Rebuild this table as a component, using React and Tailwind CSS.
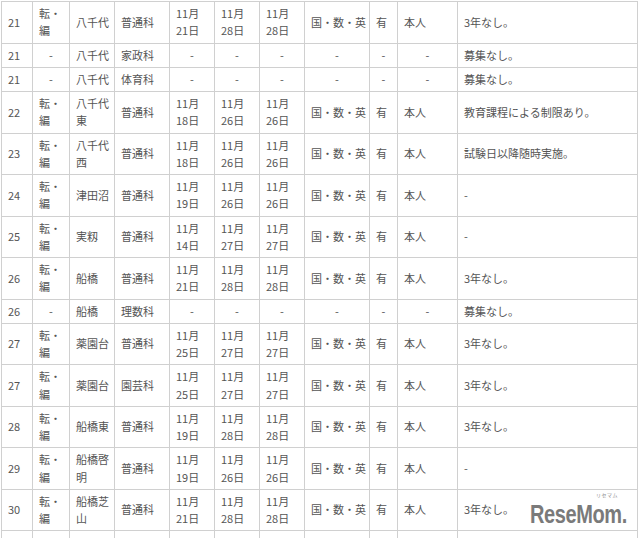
import React from "react";

const D = "-";
const rows = [
  ["21", "転・編", "八千代", "普通科", "11月21日", "11月28日", "11月28日", "国・数・英", "有", "本人", "3年なし。"],
  ["21", D, "八千代", "家政科", D, D, D, D, D, D, "募集なし。"],
  ["21", D, "八千代", "体育科", D, D, D, D, D, D, "募集なし。"],
  ["22", "転・編", "八千代東", "普通科", "11月18日", "11月26日", "11月26日", "国・数・英", "有", "本人", "教育課程による制限あり。"],
  ["23", "転・編", "八千代西", "普通科", "11月18日", "11月26日", "11月26日", "国・数・英", "有", "本人", "試験日以降随時実施。"],
  ["24", "転・編", "津田沼", "普通科", "11月19日", "11月26日", "11月26日", "国・数・英", "有", "本人", "-"],
  ["25", "転・編", "実籾", "普通科", "11月14日", "11月27日", "11月27日", "国・数・英", "有", "本人", "-"],
  ["26", "転・編", "船橋", "普通科", "11月21日", "11月28日", "11月28日", "国・数・英", "有", "本人", "3年なし。"],
  ["26", D, "船橋", "理数科", D, D, D, D, D, D, "募集なし。"],
  ["27", "転・編", "薬園台", "普通科", "11月25日", "11月27日", "11月27日", "国・数・英", "有", "本人", "3年なし。"],
  ["27", "転・編", "薬園台", "園芸科", "11月25日", "11月27日", "11月27日", "国・数・英", "有", "本人", "3年なし。"],
  ["28", "転・編", "船橋東", "普通科", "11月19日", "11月28日", "11月28日", "国・数・英", "有", "本人", "3年なし。"],
  ["29", "転・編", "船橋啓明", "普通科", "11月19日", "11月26日", "11月26日", "国・数・英", "有", "本人", "-"],
  ["30", "転・編", "船橋芝山", "普通科", "11月21日", "11月28日", "11月28日", "国・数・英", "有", "本人", "3年なし。"],
];

const colClasses = [
  "w-[31px]",
  "w-[37px]",
  "w-[45px]",
  "w-[55px]",
  "w-[45px]",
  "w-[45px]",
  "w-[45px]",
  "w-[65px]",
  "w-[28px]",
  "w-[60px]",
  "w-[180px]",
];

function renderCell(v, ci) {
  if (ci === 1 && v === "転・編") {
    return (
      <>
        転・
        <br />
        編
      </>
    );
  }
  if (ci >= 4 && ci <= 6 && v.includes("月")) {
    const [m, d] = v.split("月");
    return (
      <>
        {m}月
        <br />
        {d}
      </>
    );
  }
  if (ci === 2 && v.length > 3) {
    return (
      <>
        {v.slice(0, 3)}
        <br />
        {v.slice(3)}
      </>
    );
  }
  return v;
}

export default function App() {
  return (
    <div className="relative w-[640px] h-[538px] overflow-hidden bg-white pl-[1px] pt-[1px] font-['Noto_Sans_CJK_JP','Noto_Sans',sans-serif]">
      <table className="table-fixed border-collapse w-[636px] text-[11px] leading-[17.25px] text-[#555]">
        <colgroup>
          {colClasses.map((c, i) => (
            <col key={i} className={c} />
          ))}
        </colgroup>
        <tbody>
          {rows.map((r, ri) => (
            <tr key={ri}>
              {r.map((v, ci) => {
                const center = v === "-" && ci !== 10 && ci !== 0;
                return (
                  <td
                    key={ci}
                    className={
                      center
                        ? "border border-[#d0d0d0] px-[6px] py-[3px] align-middle whitespace-nowrap text-center"
                        : "border border-[#d0d0d0] px-[6px] py-[3px] align-middle whitespace-nowrap text-left"
                    }
                  >
                    {renderCell(v, ci)}
                  </td>
                );
              })}
            </tr>
          ))}
          <tr>
            {colClasses.map((c, i) => (
              <td key={i} className="border border-[#d0d0d0] px-[6px] py-[3px]">
                &nbsp;
                <br />
                &nbsp;
              </td>
            ))}
          </tr>
        </tbody>
      </table>

      <div className="absolute left-[530px] top-[492px] flex flex-col items-end gap-[3px] pointer-events-none">
        <div className="text-[5px] leading-[5px] text-[#8a8a8a] tracking-[0.5px] mr-[10px]">
          リセマム
        </div>
        <div className="w-[98px] h-[28px]">
          <div className="text-[25px] leading-[28px] font-bold text-[#7a7a7a] whitespace-nowrap origin-left scale-x-[0.8] tracking-[-0.5px] font-['Liberation_Sans',Arial,sans-serif]">
            ReseMom.
          </div>
        </div>
      </div>
    </div>
  );
}
